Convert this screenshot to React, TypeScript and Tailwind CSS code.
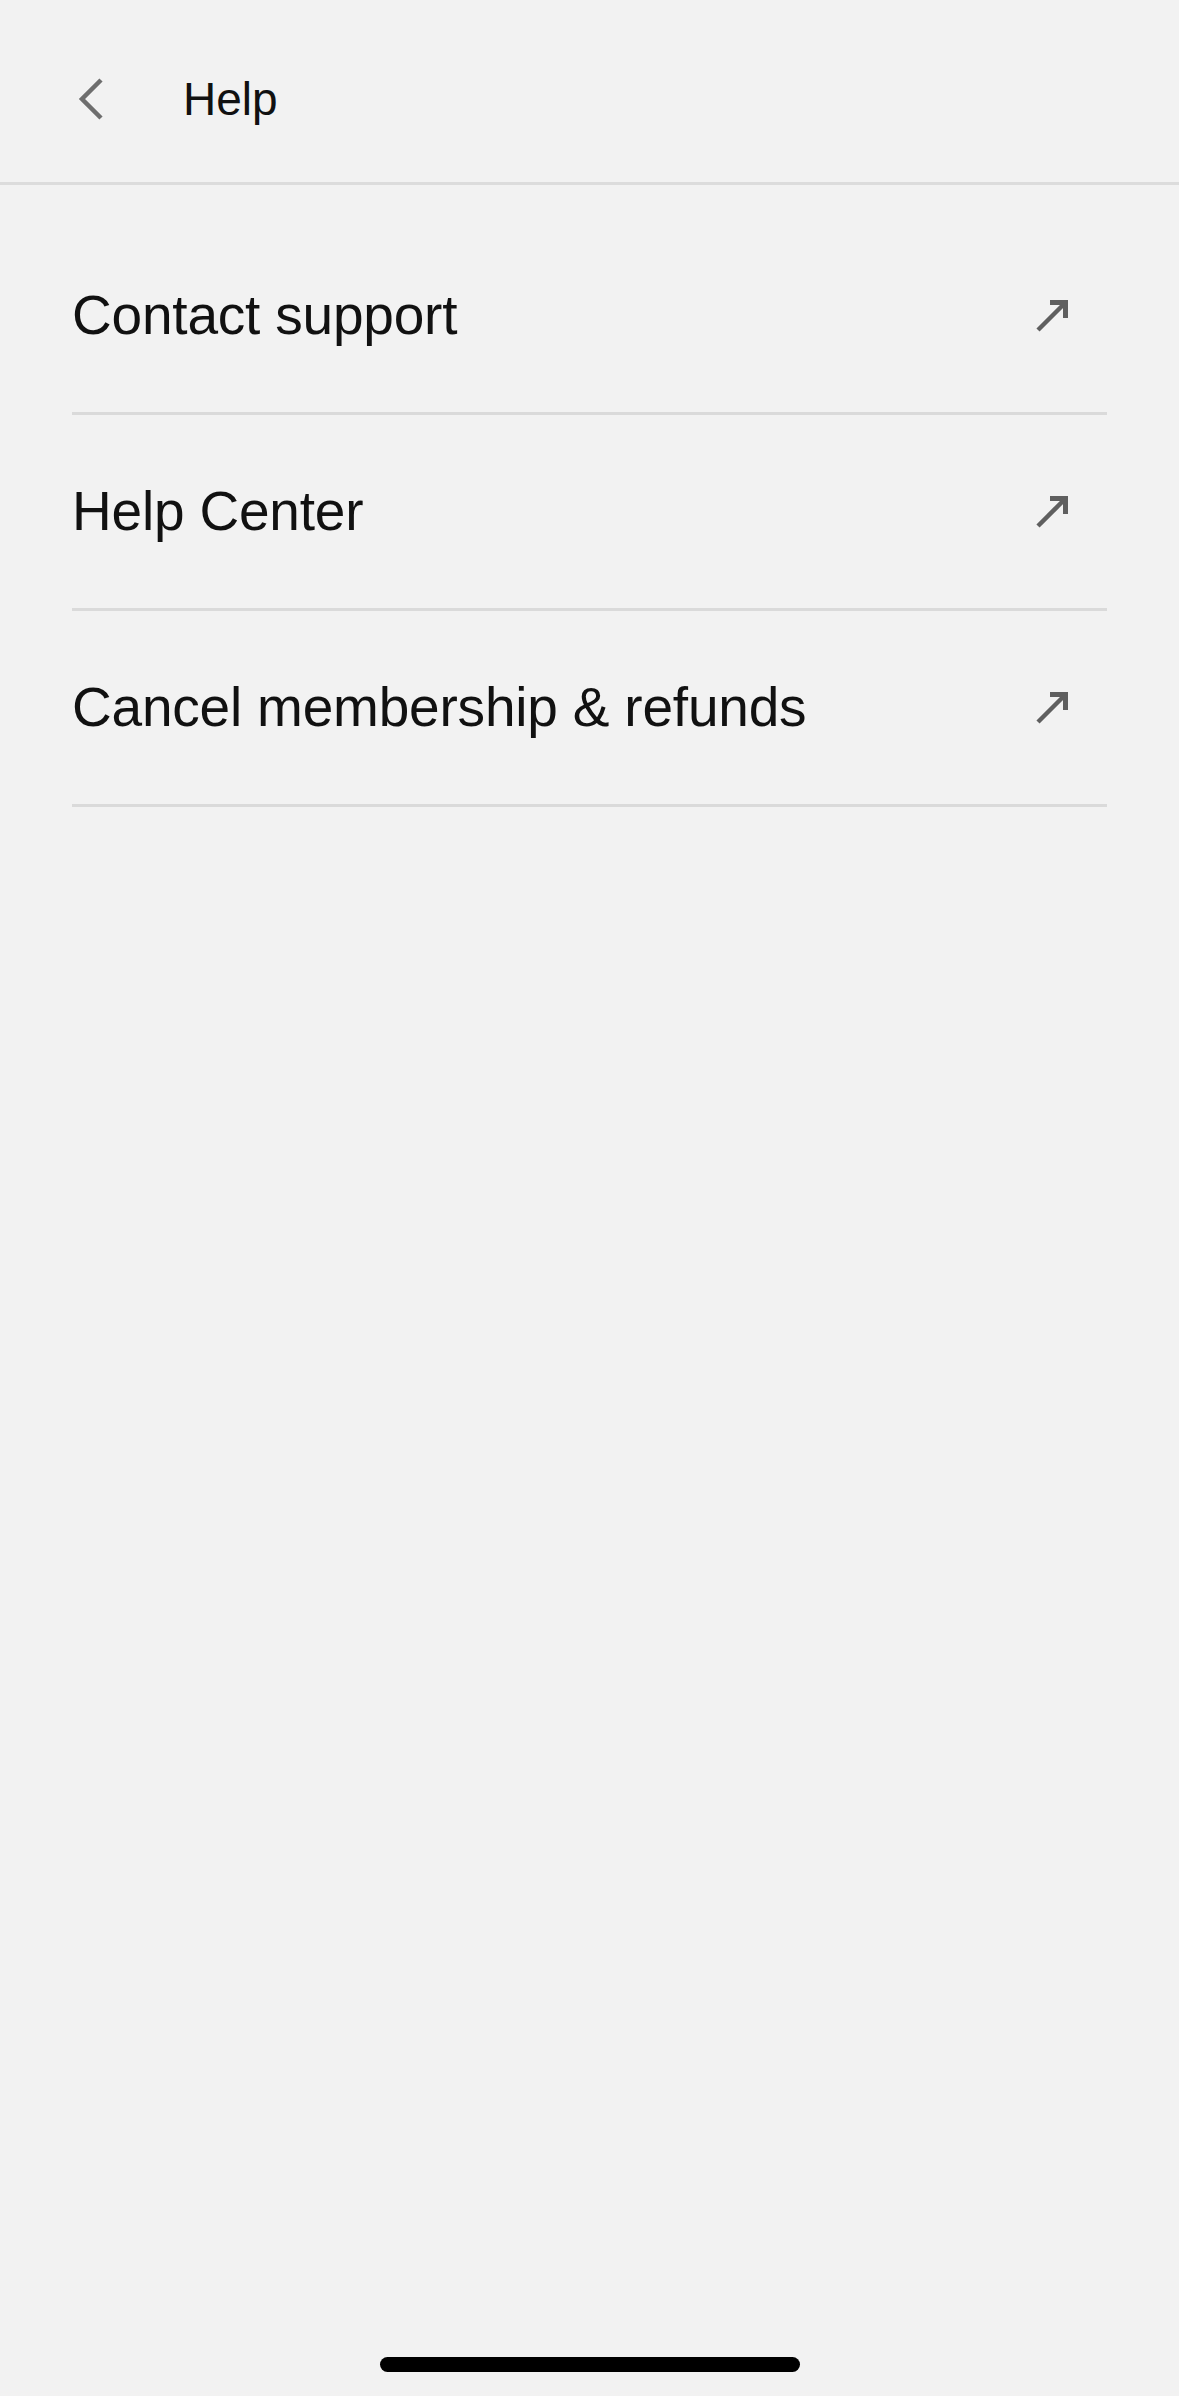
import React from 'react';

const rows = ['Contact support', 'Help Center', 'Cancel membership & refunds'];

const ExternalArrow = () => (
  <svg width="34" height="34" viewBox="0 0 34 34" fill="none" className="shrink-0">
    <line x1="3" y1="31" x2="29" y2="5" stroke="#5f5f5f" strokeWidth="4.5" />
    <polygon points="15,1 33,1 33,19 28,19 28,6 15,6" fill="#5f5f5f" />
  </svg>
);

const App: React.FC = () => {
  return (
    <div
      className="h-[2396px] w-full bg-[#f2f2f2] flex flex-col text-[#111111]"
      style={{ fontFamily: '"Liberation Sans", Arial, sans-serif' }}
    >
      {/* Header */}
      <div className="h-[185px] pt-[15px] flex items-center border-b-[3px] border-[#dcdcdc]">
        <button className="ml-[77px] w-[28px] h-[44px] flex items-center justify-center">
          <svg width="28" height="44" viewBox="0 0 28 44" fill="none">
            <polyline
              points="24,3 5,22 24,41"
              stroke="#6e6e6e"
              strokeWidth="4.5"
              strokeLinejoin="miter"
            />
          </svg>
        </button>
        <h1 className="ml-[78px] text-[46px] leading-none">Help</h1>
      </div>

      {/* Rows */}
      <div className="flex-1 pt-[34px] px-[72px]">
        {rows.map((label) => (
          <div
            key={label}
            className="h-[196px] flex items-center justify-between border-b-[3px] border-[#dadada]"
          >
            <span className="text-[55px] leading-[1.15] tracking-[-0.2px]">{label}</span>
            <div className="mr-[38px]">
              <ExternalArrow />
            </div>
          </div>
        ))}
      </div>

      {/* Home indicator */}
      <div className="flex justify-center pb-[24px]">
        <div className="w-[420px] h-[15px] rounded-full bg-black" />
      </div>
    </div>
  );
};

export default App;
